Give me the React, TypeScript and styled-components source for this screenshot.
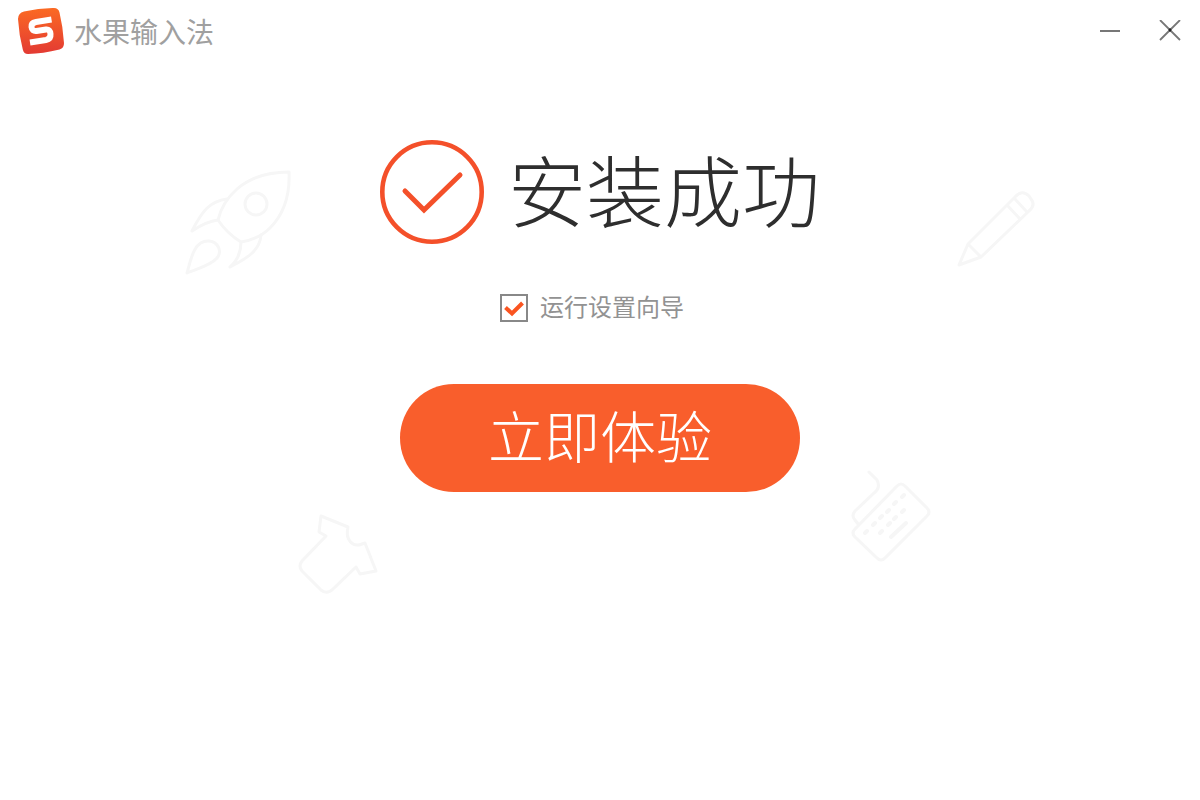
import React, { useState } from "react";
import styled, { createGlobalStyle } from "styled-components";

const GlobalStyle = createGlobalStyle`
  *, *::before, *::after { box-sizing: border-box; }
  body {
    margin: 0;
    background: #fff;
    font-family: "Noto Sans CJK SC", sans-serif;
  }
`;

const Installer = styled.div`
  position: relative;
  min-height: 100vh;
  background: #fff;
  overflow: hidden;
`;

const TitleBar = styled.header`
  display: flex;
  align-items: center;
  justify-content: space-between;
  height: 62px;
  padding: 0 10px 0 17px;
`;

const Brand = styled.div`
  display: flex;
  align-items: center;
  gap: 9px;
`;

const BrandName = styled.span`
  color: #a0a0a0;
  font-size: 28px;
  font-weight: 400;
  line-height: 40px;
`;

const WindowControls = styled.div`
  display: flex;
  gap: 20px;
`;

const WindowButton = styled.button`
  display: grid;
  place-items: center;
  width: 40px;
  height: 40px;
  padding: 0;
  border: 0;
  background: transparent;
  cursor: pointer;
`;

const Content = styled.main`
  position: relative;
  display: flex;
  flex-direction: column;
  align-items: center;
  padding-top: 78px;
`;

const Status = styled.div`
  display: flex;
  align-items: center;
  gap: 24px;
`;

const Heading = styled.h1`
  margin: 0;
  padding-bottom: 8px;
  color: #2e2e2e;
  font-size: 78px;
  font-weight: 300;
  line-height: 96px;
`;

const Option = styled.label`
  display: flex;
  align-items: center;
  gap: 12px;
  width: 200px;
  margin-top: 50px;
  color: #929292;
  font-size: 24px;
  font-weight: 400;
  line-height: 24px;
  white-space: nowrap;
  cursor: pointer;
`;

const OptionText = styled.span`
  padding-bottom: 4px;
`;

const TickBox = styled.span`
  display: grid;
  flex: none;
  place-items: center;

  > * { grid-area: 1 / 1; }
  > svg { pointer-events: none; }
`;

const TickInput = styled.input`
  appearance: none;
  width: 28px;
  height: 28px;
  margin: 0;
  border: 2px solid #888;
  background: #fff;
  cursor: pointer;
`;

const StartButton = styled.button`
  width: 400px;
  height: 108px;
  margin-top: 62px;
  padding: 0 0 8px;
  border: 0;
  border-radius: 54px;
  background: #f95e2c;
  color: #fff;
  font-family: inherit;
  font-size: 56px;
  font-weight: 300;
  line-height: 80px;
  cursor: pointer;
`;

const Doodle = styled.svg<{ $x: number; $y: number }>`
  position: absolute;
  top: ${(p) => p.$y}px;
  left: calc(50% + ${(p) => p.$x}px);
  fill: none;
  stroke: #f6f6f6;
  stroke-width: 3;
  stroke-linecap: round;
  stroke-linejoin: round;
  pointer-events: none;
`;

const Logo = () => (
  <svg width="48" height="48" viewBox="0 0 48 48" aria-hidden="true">
    <defs>
      <linearGradient id="logo-fill" x1="0" y1="0" x2="0" y2="1">
        <stop offset="0" stopColor="#fb6a23" />
        <stop offset="1" stopColor="#e33a33" />
      </linearGradient>
    </defs>
    <path
      d="M7 4.500Q22 .8 37 1Q41.500 1 42.500 5.500Q46 20 47 36Q47.200 41 42.500 42.500Q26 46.500 11 47Q6.800 47 5.800 42.500Q2 28 1 12Q1 6 7 4.500Z"
      fill="url(#logo-fill)"
    />
    <path
      d="M34.500 12.500L19 15Q14 16 14.500 20Q15 24.500 19.500 24L29 22.500Q33 22 33.500 27Q34 32 29 33L13 35.500"
      fill="none"
      stroke="#fff"
      strokeWidth="6"
    />
  </svg>
);

const Doodles = () => (
  <>
    <Doodle $x={-430} $y={160} width="140" height="125" viewBox="0 0 140 125" aria-hidden="true">
      <path d="M119 12C120 34 114 54 100 68C92 76 83 80 71 82C61 76 54 69 48 60C51 47 58 37 67 29C81 17 100 12 119 12Z" />
      <circle cx="86" cy="44" r="11" />
      <path d="M57 39C40 41 32 51 22 71C31 65 39 61 48 60M71 82C71 92 67 101 60 107C78 98 90 90 91 75" />
      <path d="M17 113C21 99 24 80 39 81C49 82 52 92 47 98C40 106 28 108 17 113Z" />
    </Doodle>
    <Doodle $x={340} $y={180} width="110" height="95" viewBox="0 0 110 95" aria-hidden="true">
      <path d="M19 85L28 64L75 17Q82 9 89 16L91 19Q96 25 89 31L41 77ZM28 64L41 77M67 25L80 39M74 18L87 32" />
    </Doodle>
    <Doodle $x={-315} $y={501} width="110" height="105" viewBox="0 0 110 105" aria-hidden="true">
      <path d="M36 15L63 26C60 38 67 47 77 43L80 42L91 70L75 73L71 66L48 88Q42 94 36 89L17 70Q13 65 17 60L41 35L34 31Z" />
    </Doodle>
    <Doodle $x={235} $y={460} width="110" height="110" viewBox="0 0 110 110" aria-hidden="true">
      <path d="M62 26Q66 22 70 26L92 48Q96 52 92 56L50 98Q46 102 42 98L20 77Q16 73 20 69ZM23 64L20 60Q16 56 20 51L39 33Q46 28 42 20L34 12" />
      <path
        d="M30 73l2-2M38 65l2-2M45 58l2-2M52 52l2-2M59 44l2-2M67 37l2-2M45 73l2-2M53 65l2-2M59 59l2-2M67 52l2-2M56 77L71 63"
        strokeWidth="4"
      />
    </Doodle>
  </>
);

export default function App() {
  const [runWizard, setRunWizard] = useState(true);

  return (
    <Installer>
      <GlobalStyle />
      <Doodles />
      <TitleBar>
        <Brand>
          <Logo />
          <BrandName>水果输入法</BrandName>
        </Brand>
        <WindowControls>
          <WindowButton type="button" aria-label="最小化">
            <svg width="22" height="22" viewBox="0 0 22 22" fill="none" stroke="#777" strokeWidth="2">
              <path d="M1 11H21" />
            </svg>
          </WindowButton>
          <WindowButton type="button" aria-label="关闭">
            <svg width="22" height="22" viewBox="0 0 22 22" fill="none" stroke="#777" strokeWidth="1.800">
              <path d="M1 0L21 20M21 0L1 20" />
              <path d="M10 9L12 11M12 9L10 11" stroke="#222" />
            </svg>
          </WindowButton>
        </WindowControls>
      </TitleBar>
      <Content>
        <Status>
          <svg width="104" height="104" viewBox="0 0 104 104" fill="none" stroke="#f4502a" aria-hidden="true">
            <circle cx="52" cy="52" r="49.700" strokeWidth="4.600" />
            <path d="M25 51L44 70L80 35" strokeWidth="5" strokeLinecap="round" />
          </svg>
          <Heading>安装成功</Heading>
        </Status>
        <Option>
          <TickBox>
            <TickInput
              type="checkbox"
              checked={runWizard}
              onChange={(e) => setRunWizard(e.target.checked)}
            />
            {runWizard && (
              <svg width="28" height="28" viewBox="0 0 28 28" fill="none" stroke="#fa5420" strokeWidth="4" aria-hidden="true">
                <path d="M5.500 13.500L12 19.500L22.500 9" />
              </svg>
            )}
          </TickBox>
          <OptionText>运行设置向导</OptionText>
        </Option>
        <StartButton type="button">立即体验</StartButton>
      </Content>
    </Installer>
  );
}
